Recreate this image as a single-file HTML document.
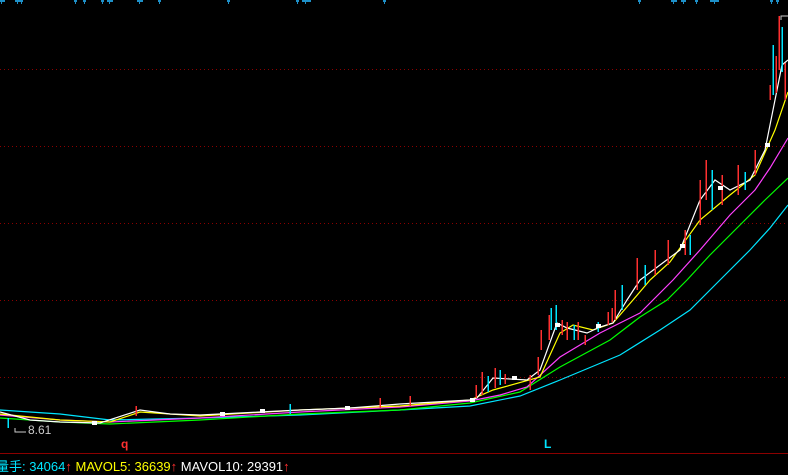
<!DOCTYPE html>
<html><head><meta charset="utf-8"><style>
html,body{margin:0;padding:0;background:#000;width:788px;height:473px;overflow:hidden}
svg{position:absolute;left:0;top:0}
.t{position:absolute;font-family:"Liberation Sans","Noto Sans CJK SC",sans-serif;font-size:13px;white-space:nowrap}
</style></head><body>
<svg width="788" height="473" viewBox="0 0 788 473" shape-rendering="crispEdges">
<g stroke="#8b0000" stroke-dasharray="1,3" stroke-width="1">
<line x1="0" y1="69.5" x2="788" y2="69.5"/><line x1="0" y1="146.5" x2="788" y2="146.5"/>
<line x1="0" y1="223.5" x2="788" y2="223.5"/><line x1="0" y1="300.5" x2="788" y2="300.5"/>
<line x1="0" y1="377.5" x2="788" y2="377.5"/></g>
<line x1="0" y1="453.5" x2="788" y2="453.5" stroke="#8b0000"/>
<g fill="#1e90c8">
<rect x="0" y="0" width="5" height="2"/><rect x="15" y="0" width="8" height="2"/><rect x="74" y="0" width="3" height="2"/><rect x="83" y="0" width="3" height="2"/><rect x="101" y="0" width="3" height="2"/><rect x="107" y="0" width="6" height="2"/><rect x="137" y="0" width="6" height="2"/><rect x="158" y="0" width="3" height="2"/><rect x="227" y="0" width="3" height="2"/><rect x="296" y="0" width="3" height="2"/><rect x="302" y="0" width="9" height="2"/><rect x="383" y="0" width="3" height="2"/>
<rect x="638" y="0" width="3" height="2"/><rect x="671" y="0" width="6" height="2"/><rect x="681" y="0" width="5" height="2"/><rect x="695" y="0" width="3" height="2"/><rect x="710" y="0" width="9" height="2"/><rect x="770" y="0" width="3" height="2"/><rect x="776" y="0" width="3" height="2"/>
<rect x="1" y="2" width="1" height="2"/><rect x="17" y="2" width="1" height="2"/><rect x="21" y="2" width="1" height="2"/><rect x="75" y="2" width="1" height="2"/><rect x="84" y="2" width="1" height="2"/><rect x="102" y="2" width="1" height="2"/><rect x="109" y="2" width="1" height="2"/><rect x="139" y="2" width="1" height="2"/><rect x="159" y="2" width="1" height="2"/><rect x="228" y="2" width="1" height="2"/><rect x="297" y="2" width="1" height="2"/><rect x="305" y="2" width="1" height="2"/><rect x="384" y="2" width="1" height="2"/><rect x="639" y="2" width="1" height="2"/><rect x="673" y="2" width="1" height="2"/><rect x="683" y="2" width="1" height="2"/><rect x="696" y="2" width="1" height="2"/><rect x="714" y="2" width="1" height="2"/><rect x="771" y="2" width="1" height="2"/><rect x="777" y="2" width="1" height="2"/>
</g>
<g fill="none" stroke-width="1.2" shape-rendering="auto">
<polyline stroke="#00e5ff" points="0,410 60,414 110,420 200,418 300,415 400,410 470,406 520,396 560,380 620,355 660,330 690,310 720,280 750,250 770,228 788,205"/>
<polyline stroke="#00ff00" points="0,418 60,422 110,424 200,420 300,414 400,410 470,403 520,392 560,367 610,340 640,317 667,300 687,280 710,255 740,225 765,200 788,178"/>
<polyline stroke="#ff40ff" points="0,415 60,420 110,422 200,418 300,412 400,407 470,401 500,395 527,387 560,357 600,333 640,313 673,280 700,250 730,215 755,190 770,168 788,138"/>
<polyline stroke="#ffff00" points="0,414 60,420 110,422 140,412 200,416 300,410 400,406 470,400 493,390 540,377 560,333 573,325 593,330 613,323 633,300 650,280 670,262 700,220 730,195 755,175 775,130 788,92"/>
<polyline stroke="#ffffff" points="0,412 30,420 60,422 100,423 140,410 170,414 200,415 260,412 300,410 350,408 400,404 470,400 477,398 493,378 527,380 540,370 557,323 567,328 587,333 600,327 613,323 627,300 640,280 660,265 680,250 700,200 715,180 730,190 750,180 765,150 775,100 782,65 788,60"/>
</g>
<g stroke-width="1.5">
<g stroke="#ff3030">
<line x1="136" y1="406" x2="136" y2="416"/><line x1="380" y1="398" x2="380" y2="408"/><line x1="410" y1="396" x2="410" y2="406"/>
<line x1="476" y1="385" x2="476" y2="398"/><line x1="482" y1="372" x2="482" y2="395"/><line x1="495" y1="368" x2="495" y2="388"/><line x1="505" y1="374" x2="505" y2="384"/><line x1="530" y1="375" x2="530" y2="390"/><line x1="538" y1="357" x2="538" y2="375"/>
<line x1="541" y1="330" x2="541" y2="350"/><line x1="549" y1="315" x2="549" y2="340"/><line x1="562" y1="320" x2="562" y2="335"/><line x1="567" y1="322" x2="567" y2="340"/><line x1="578" y1="322" x2="578" y2="340"/><line x1="585" y1="335" x2="585" y2="345"/>
<line x1="608" y1="312" x2="608" y2="325"/><line x1="612" y1="308" x2="612" y2="322"/><line x1="615" y1="290" x2="615" y2="320"/><line x1="637" y1="258" x2="637" y2="290"/><line x1="655" y1="250" x2="655" y2="275"/>
<line x1="668" y1="240" x2="668" y2="265"/><line x1="685" y1="230" x2="685" y2="255"/><line x1="700" y1="180" x2="700" y2="225"/>
<line x1="706" y1="160" x2="706" y2="200"/><line x1="722" y1="175" x2="722" y2="205"/><line x1="738" y1="165" x2="738" y2="195"/>
<line x1="755" y1="150" x2="755" y2="175"/><line x1="770" y1="85" x2="770" y2="100"/><line x1="776" y1="56" x2="776" y2="93"/><line x1="779" y1="16" x2="779" y2="70"/><line x1="785" y1="63" x2="785" y2="100"/>
</g>
<g stroke="#00e5ff">
<line x1="8" y1="418" x2="8" y2="428"/><line x1="290" y1="404" x2="290" y2="414"/><line x1="488" y1="376" x2="488" y2="392"/><line x1="500" y1="370" x2="500" y2="385"/>
<line x1="551" y1="308" x2="551" y2="330"/><line x1="556" y1="305" x2="556" y2="330"/><line x1="574" y1="325" x2="574" y2="340"/><line x1="598" y1="322" x2="598" y2="332"/><line x1="622" y1="285" x2="622" y2="310"/>
<line x1="645" y1="265" x2="645" y2="285"/><line x1="690" y1="235" x2="690" y2="255"/><line x1="712" y1="170" x2="712" y2="210"/>
<line x1="745" y1="172" x2="745" y2="190"/><line x1="773" y1="45" x2="773" y2="95"/><line x1="782" y1="27" x2="782" y2="72"/>
</g></g>
<g fill="#fff"><rect x="92" y="421" width="5" height="4"/><rect x="220" y="412" width="5" height="4"/><rect x="260" y="409" width="5" height="4"/><rect x="345" y="406" width="5" height="4"/><rect x="470" y="398" width="5" height="4"/><rect x="512" y="376" width="5" height="4"/><rect x="555" y="323" width="5" height="4"/><rect x="596" y="324" width="5" height="4"/><rect x="680" y="244" width="5" height="4"/><rect x="718" y="186" width="5" height="4"/><rect x="765" y="143" width="5" height="4"/></g>
<polyline fill="none" stroke="#ccc" points="788,16 781,16 781,20"/>
<polyline fill="none" stroke="#ccc" points="15,428 15,432 26,432"/>
</svg>
<div class="t" style="left:28px;top:423px;color:#ccc;font-size:12px">8.61</div>
<div class="t" style="left:121px;top:437px;color:#ff3030;font-size:12px;font-weight:bold">q</div>
<div class="t" style="left:544px;top:437px;color:#00e5ff;font-size:12px;font-weight:bold">L</div>
<div class="t" style="left:-4px;top:456px;color:#00e5ff">量手: 34064<span style="color:#ff3030">↑</span> <span style="color:#ffff00">MAVOL5: 36639</span><span style="color:#ff3030">↑</span> <span style="color:#fff">MAVOL10: 29391</span><span style="color:#ff3030">↑</span></div>
</body></html>
